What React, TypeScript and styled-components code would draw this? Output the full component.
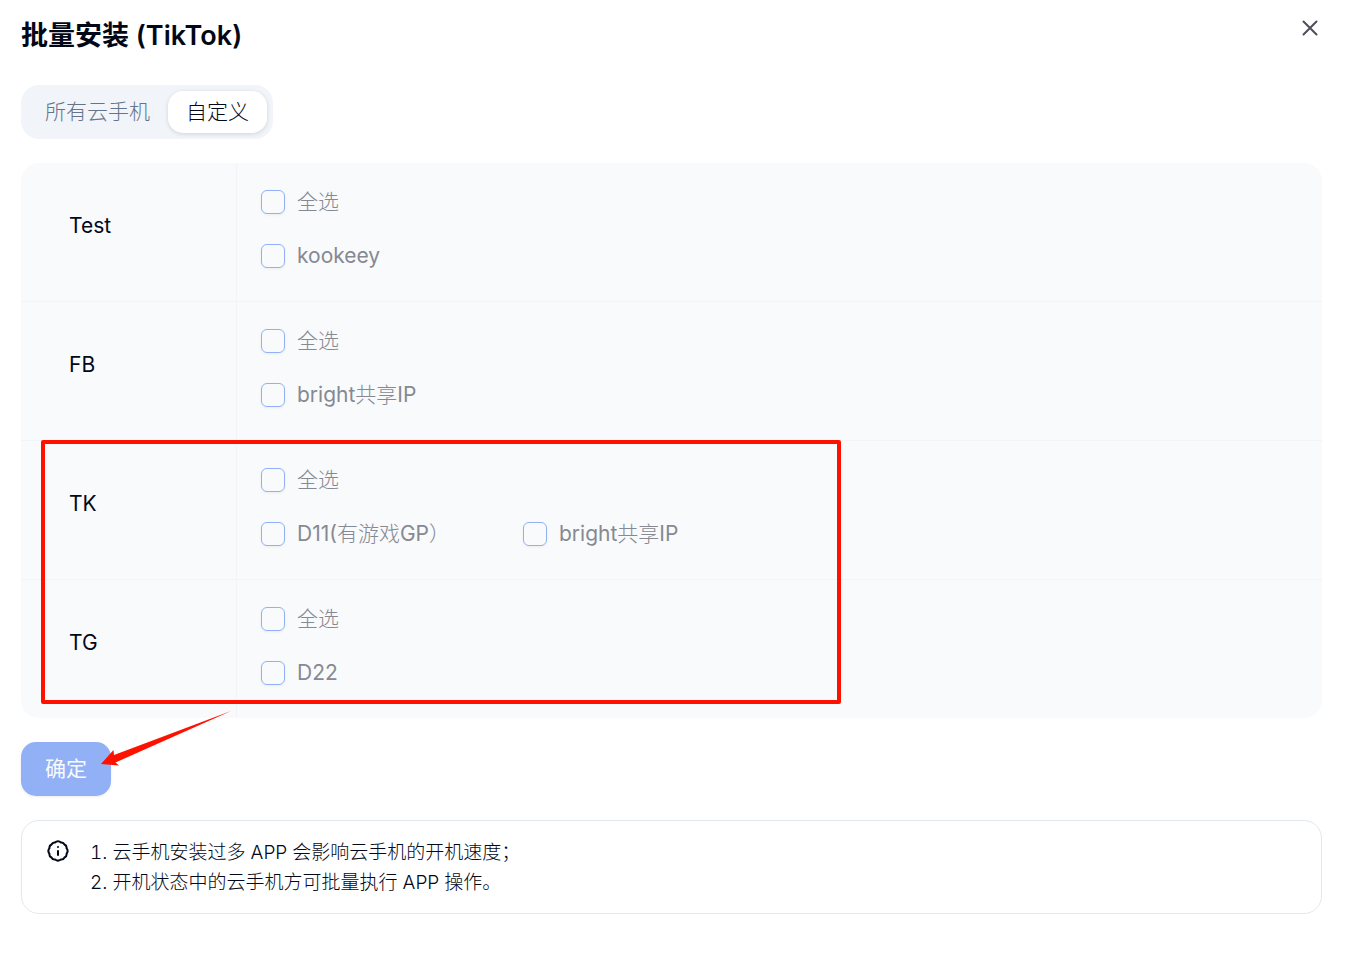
import React, { useState } from "react";
import styled, { createGlobalStyle } from "styled-components";

const GlobalStyle = createGlobalStyle`
  *, *::before, *::after { box-sizing: border-box; }
  body {
    margin: 0;
    background: #fff;
    color: #020817;
    font-family: Inter, "Noto Sans CJK SC Light", "Noto Sans CJK SC", sans-serif;
    font-size: 21px;
    line-height: 30px;
  }
  button, input { font: inherit; }
`;

const Dialog = styled.main`
  display: flex;
  flex-direction: column;
  align-items: flex-start;
  gap: 24px;
  padding: 15px 24px 36px 21px;
`;

const Header = styled.header`
  display: flex;
  align-self: stretch;
  justify-content: space-between;
  align-items: flex-start;
  height: 46px;
`;

const Title = styled.h1`
  margin: 0;
  font-family: Inter, "Noto Sans CJK SC", sans-serif;
  font-size: 27px;
  line-height: 42px;
  font-weight: 600;
`;

const CloseButton = styled.button`
  display: flex;
  padding: 1px 0;
  border: 0;
  background: none;
  color: #4e4f5c;
  cursor: pointer;
`;

const TabList = styled.div`
  display: flex;
  height: 54px;
  padding: 6px;
  border-radius: 18px;
  background: #f1f5f9;
`;

const Tab = styled.button<{ $active: boolean }>`
  padding: 0 18px;
  border: 0;
  border-radius: 15px;
  background: ${(p) => (p.$active ? "#fff" : "transparent")};
  color: ${(p) => (p.$active ? "#020817" : "#64748b")};
  box-shadow: ${(p) => (p.$active ? "0 1px 4px rgba(0, 0, 0, 0.14)" : "none")};
  line-height: 42px;
  cursor: pointer;
`;

const Panel = styled.section`
  position: relative;
  align-self: stretch;
  border-radius: 18px;
  background: #f8fafc;
`;

const Group = styled.fieldset`
  display: grid;
  grid-template-columns: 216px 1fr;
  min-width: 0;
  margin: 0;
  padding: 0;
  border: 0;
  & + & { border-top: 1px solid #f1f5f9; }
`;

const GroupName = styled.div`
  display: flex;
  align-items: center;
  padding: 0 48px 12px;
  border-right: 1px solid #f1f5f9;
`;

const GroupBody = styled.div`
  display: flex;
  flex-direction: column;
  gap: 24px;
  padding: 24px 24px 30px;
`;

const Options = styled.div`
  display: grid;
  grid-template-columns: repeat(auto-fill, 250px);
  gap: 12px;
`;

const Option = styled.label`
  display: flex;
  align-items: center;
  gap: 12px;
  color: #868992;
  white-space: nowrap;
`;

const Checkbox = styled.input`
  appearance: none;
  flex: none;
  width: 24px;
  height: 24px;
  margin: 0;
  border: 1px solid #92b1f5;
  border-radius: 6px;
  background: transparent;
  box-shadow: 0 1px 3px rgba(0, 0, 0, 0.06);
  &:checked { background: #92b1f5; }
`;

const Highlight = styled.div`
  position: absolute;
  left: 20px;
  top: 277px;
  width: 800px;
  height: 264px;
  border: 4px solid #ff1100;
  border-radius: 2px;
  pointer-events: none;
`;

const Pointer = styled.svg`
  position: absolute;
  left: 80px;
  top: 547px;
  pointer-events: none;
`;

const ConfirmButton = styled.button`
  height: 54px;
  padding: 0 24px;
  border: 0;
  border-radius: 15px;
  background: #92b0f5;
  color: #f8fafc;
  font-family: Inter, "Noto Sans CJK SC", sans-serif;
  box-shadow: 0 1px 3px rgba(0, 0, 0, 0.08);
  cursor: pointer;
`;

const Notice = styled.aside`
  display: flex;
  align-self: stretch;
  align-items: flex-start;
  gap: 20px;
  padding: 16px 24px 15px;
  border: 1px solid #e2e8f0;
  border-radius: 18px;
  font-size: 19px;
  font-weight: 300;
  font-variant-numeric: tabular-nums;
`;

const NoticeText = styled.p`
  margin: 0;
  padding-top: 1px;
`;

const InfoIcon = () => (
  <svg width="24" height="28" viewBox="0 0 24 28" fill="none" stroke="currentColor" strokeWidth="2" strokeLinecap="round" strokeLinejoin="round" aria-hidden="true">
    <path d="M12 4.200Q13.800 4.200 15 5.500Q17.300 5.100 18.500 7.500Q21 8.700 20.500 11.200Q22.800 14 20.500 16.800Q21 19.300 18.500 20.500Q17.300 22.900 14.800 22.500Q12 24.800 9.200 22.500Q6.700 22.900 5.500 20.500Q3 19.300 3.500 16.800Q1.200 14 3.500 11.200Q3 8.700 5.500 7.500Q6.700 5.100 9 5.500Q10.200 4.200 12 4.200Z" />
    <path d="M12 14V18M12 10V10.100" />
  </svg>
);

const groups = [
  { name: "Test", items: ["kookeey"] },
  { name: "FB", items: ["bright共享IP"] },
  { name: "TK", items: ["D11(有游戏GP）", "bright共享IP"] },
  { name: "TG", items: ["D22"] },
];

const tabs = ["所有云手机", "自定义"];

export default function App() {
  const [activeTab, setActiveTab] = useState("自定义");
  return (
    <>
      <GlobalStyle />
      <Dialog>
        <Header>
          <Title>批量安装 (TikTok)</Title>
          <CloseButton type="button" aria-label="关闭">
            <svg width="24" height="24" viewBox="0 0 24 24" fill="none" stroke="currentColor" strokeWidth="2" aria-hidden="true">
              <path d="M5.500 5.500L18.500 18.500M18.500 5.500L5.500 18.500" strokeLinecap="round" />
            </svg>
          </CloseButton>
        </Header>
        <TabList role="tablist">
          {tabs.map((tab) => (
            <Tab key={tab} type="button" role="tab" aria-selected={tab === activeTab} $active={tab === activeTab} onClick={() => setActiveTab(tab)}>
              {tab}
            </Tab>
          ))}
        </TabList>
        <Panel>
          {groups.map((group) => (
            <Group key={group.name} aria-label={group.name}>
              <GroupName>{group.name}</GroupName>
              <GroupBody>
                <Option>
                  <Checkbox type="checkbox" />
                  全选
                </Option>
                <Options>
                  {group.items.map((item) => (
                    <Option key={item}>
                      <Checkbox type="checkbox" />
                      {item}
                    </Option>
                  ))}
                </Options>
              </GroupBody>
            </Group>
          ))}
          <Highlight />
          <Pointer width="132" height="58" viewBox="0 0 132 58" aria-hidden="true">
            <path d="M130 1L13 45L12.500 40L0 54L18 55.500L14.500 52.500Z" fill="#ff1100" />
          </Pointer>
        </Panel>
        <ConfirmButton type="button">确定</ConfirmButton>
        <Notice>
          <InfoIcon />
          <NoticeText>
            1. 云手机安装过多 APP 会影响云手机的开机速度；
            <br />
            2. 开机状态中的云手机方可批量执行 APP 操作。
          </NoticeText>
        </Notice>
      </Dialog>
    </>
  );
}
